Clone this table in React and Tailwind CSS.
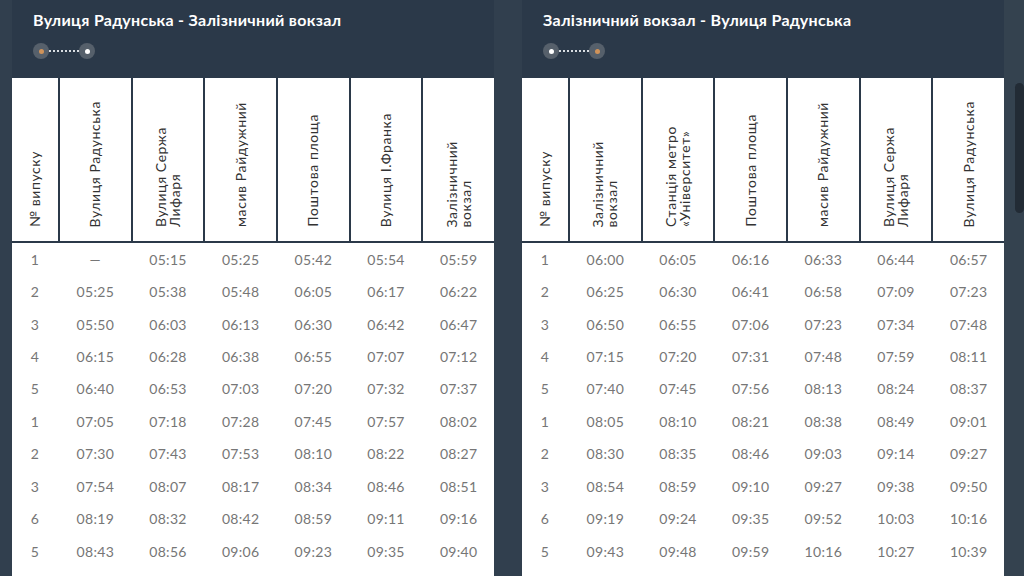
import React from 'react';

const font = { fontFamily: 'Lato, "Open Sans", sans-serif' };

const routes = [
  {
    title: 'Вулиця Радунська - Залізничний вокзал',
    reversed: false,
    stops: [
      ['№ випуску'],
      ['Вулиця Радунська'],
      ['Вулиця Сержа', 'Лифаря'],
      ['масив Райдужний'],
      ['Поштова площа'],
      ['Вулиця І.Франка'],
      ['Залізничний', 'вокзал'],
    ],
    rows: [
      ['1', '—', '05:15', '05:25', '05:42', '05:54', '05:59'],
      ['2', '05:25', '05:38', '05:48', '06:05', '06:17', '06:22'],
      ['3', '05:50', '06:03', '06:13', '06:30', '06:42', '06:47'],
      ['4', '06:15', '06:28', '06:38', '06:55', '07:07', '07:12'],
      ['5', '06:40', '06:53', '07:03', '07:20', '07:32', '07:37'],
      ['1', '07:05', '07:18', '07:28', '07:45', '07:57', '08:02'],
      ['2', '07:30', '07:43', '07:53', '08:10', '08:22', '08:27'],
      ['3', '07:54', '08:07', '08:17', '08:34', '08:46', '08:51'],
      ['6', '08:19', '08:32', '08:42', '08:59', '09:11', '09:16'],
      ['5', '08:43', '08:56', '09:06', '09:23', '09:35', '09:40'],
    ],
  },
  {
    title: 'Залізничний вокзал - Вулиця Радунська',
    reversed: true,
    stops: [
      ['№ випуску'],
      ['Залізничний', 'вокзал'],
      ['Станція метро', '«Університет»'],
      ['Поштова площа'],
      ['масив Райдужний'],
      ['Вулиця Сержа', 'Лифаря'],
      ['Вулиця Радунська'],
    ],
    rows: [
      ['1', '06:00', '06:05', '06:16', '06:33', '06:44', '06:57'],
      ['2', '06:25', '06:30', '06:41', '06:58', '07:09', '07:23'],
      ['3', '06:50', '06:55', '07:06', '07:23', '07:34', '07:48'],
      ['4', '07:15', '07:20', '07:31', '07:48', '07:59', '08:11'],
      ['5', '07:40', '07:45', '07:56', '08:13', '08:24', '08:37'],
      ['1', '08:05', '08:10', '08:21', '08:38', '08:49', '09:01'],
      ['2', '08:30', '08:35', '08:46', '09:03', '09:14', '09:27'],
      ['3', '08:54', '08:59', '09:10', '09:27', '09:38', '09:50'],
      ['6', '09:19', '09:24', '09:35', '09:52', '10:03', '10:16'],
      ['5', '09:43', '09:48', '09:59', '10:16', '10:27', '10:39'],
    ],
  },
];

function Dot({ active }) {
  return (
    <span className="w-4 h-4 rounded-full bg-[#56606b] flex items-center justify-center">
      <span className={active ? "w-[5px] h-[5px] rounded-full bg-[#d0935a]" : "w-[5px] h-[5px] rounded-full bg-white"} />
    </span>
  );
}

function RouteIndicator({ reversed }) {
  return (
    <div className="flex items-center">
      <Dot active={!reversed} />
      <span className="w-[30px] border-t-2 border-dotted border-[#d8dde2]" />
      <Dot active={reversed} />
    </div>
  );
}

function Timetable({ route }) {
  return (
    <div className="w-[482px] flex flex-col bg-[#2b3949]">
      <div className="h-[78px] pl-[21px] pt-[11px]">
        <h2 className="text-[16px] font-bold text-white leading-[18px] tracking-[0.3px]">{route.title}</h2>
        <div className="mt-[14px]">
          <RouteIndicator reversed={route.reversed} />
        </div>
      </div>
      <div className="grid grid-cols-[46px_repeat(6,1fr)] gap-x-[2px] h-[163px]">
        {route.stops.map((lines, i) => (
          <div key={i} className="bg-white flex items-end justify-center pb-[14px]">
            <div className="[writing-mode:vertical-rl] [text-orientation:sideways] rotate-180 text-[14px] leading-[14px] tracking-[0.6px] text-[#333] whitespace-nowrap">
              {lines.map((l, j) => (
                <div key={j}>{l}</div>
              ))}
            </div>
          </div>
        ))}
      </div>
      <div className="mt-[2px] flex-1 bg-white">
        {route.rows.map((row, r) => (
          <div key={r} className="grid grid-cols-[46px_repeat(6,1fr)] gap-x-[2px] h-[32.45px] items-center">
            {row.map((cell, c) => (
              <div key={c} className="text-center text-[14px] tracking-[0.3px] text-[#767676]">{cell}</div>
            ))}
          </div>
        ))}
      </div>
    </div>
  );
}

export default function App() {
  return (
    <div className="w-[1024px] h-[576px] overflow-hidden flex bg-[#313f4e]" style={font}>
      <div className="flex gap-[28px] pl-[12px]">
        {routes.map((route, i) => (
          <Timetable key={i} route={route} />
        ))}
      </div>
      <div className="w-[20px] ml-auto bg-[#34424f] pt-[83px] flex justify-end">
        <div className="w-[9px] h-[130px] rounded-full bg-[#222b35]" />
      </div>
    </div>
  );
}
